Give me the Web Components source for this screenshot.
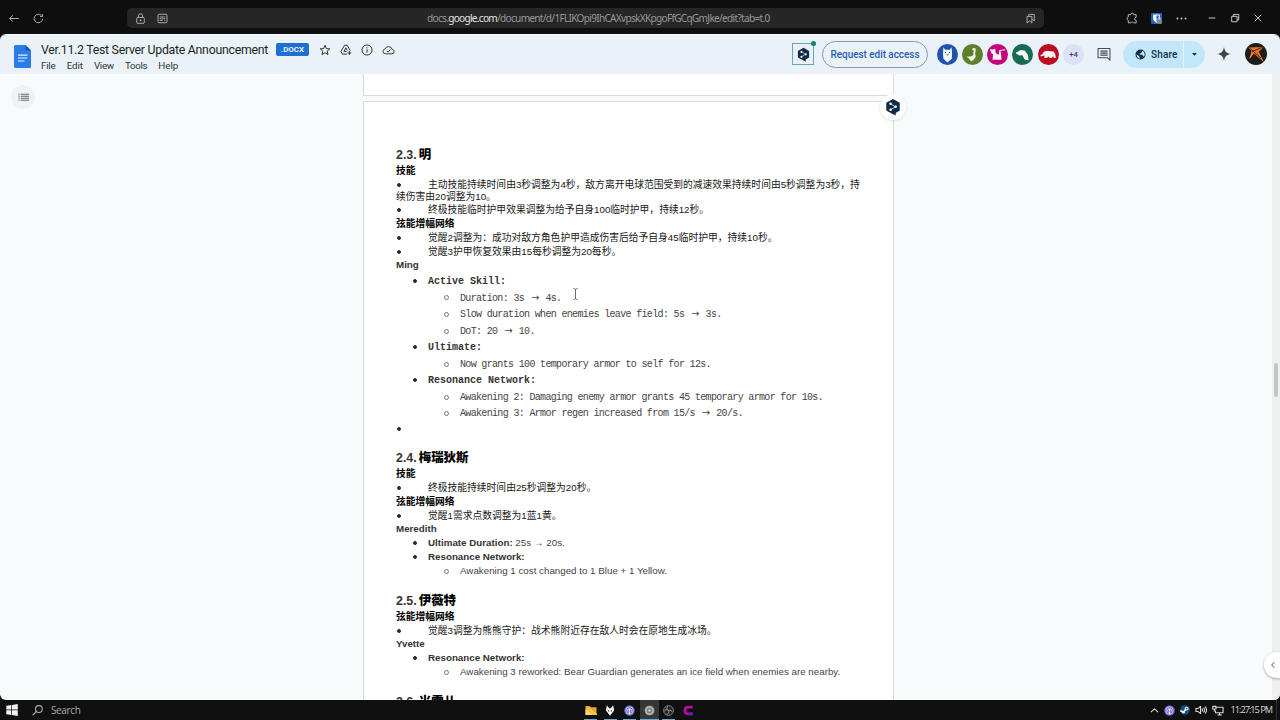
<!DOCTYPE html>
<html lang="zh-CN">
<head>
<meta charset="utf-8">
<title>Ver.11.2 Test Server Update Announcement</title>
<style>
  body {
    margin: 0;
    width: 1280px;
    height: 720px;
    overflow: hidden;
    background: #0e0e0e;
  }
</style>
</head>
<body>
<app-desktop></app-desktop>

<script>
// Inline icons, keyed by name: [viewBox, markup]
const deeplMark = `<path fill="#102b46" d="M10 1 17.5 5.3V14L13 16.7V19.5L9.5 17.8 2.5 14V5.3z"/>
  <path d="M7.3 6.5 13 9.8 7.3 13" stroke="#dff3fa" stroke-width=".9" fill="none"/>
  <g fill="#fff"><circle cx="7.3" cy="6.5" r="1.4"/><circle cx="13" cy="9.8" r="1.4"/><circle cx="7.3" cy="13" r="1.4"/></g>`

const podcast = `<circle cx="12" cy="12" r="11.5" fill="#6a61c8"/>
  <g fill="none" stroke="#dcd8ff" stroke-width="1.7"><circle cx="12" cy="12" r="8"/><path d="M8.3 14.6a4.5 4.5 0 1 1 7.4 0"/></g>
  <circle cx="12" cy="11" r="2.1" fill="#fff"/><path d="M10.1 14h3.8l-.6 6h-2.6z" fill="#fff"/>`

const icons = {
  back: ["0 0 16 16", `<path d="M14.5 8H2M6.5 3.5 2 8l4.500 4.500" class="line"/>`],
  reload: ["0 0 16 16", `<path d="M14 8.500A6.200 6.200 0 1 1 12.300 3.700M13.800 1.500V5.200H10.200" class="line"/>`],
  lock: ["0 0 16 16", `<rect x="2.500" y="6.500" width="11" height="8.500" rx="1.500" class="line"/><path d="M5 6.500V4a3 3 0 0 1 6 0v2.500" class="line"/><circle cx="8" cy="10.800" r="1.200" fill="currentColor"/>`],
  tune: ["0 0 16 16", `<rect x="1.500" y="1.800" width="13" height="12.400" rx="1.500" class="line"/><path d="M4 5.700h3M10 5.700h2M4 8.200h2.500M9 8.200h3M4 10.800h4M10.500 10.800h1.500M8.500 4.500v2.300M7.700 7v2.300" class="line"/>`],
  bookmarks: ["0 0 16 16", `<path d="M3 5h7v9.500L6.500 11.500 3 14.500zM5.500 4.500V2h8v9.500l-3-2.300" class="line"/>`],
  puzzle: ["0 0 16 16", `<path d="M6.300 3.500a2 2 0 0 1 4 0h3.200V7a2 2 0 0 0 0 4v3.500H10a2 2 0 0 0-3.600 0H3V11a2.200 2.200 0 0 1 0-4.200V3.500z" class="line"/>`],
  shield: ["0 0 16 16", `<rect width="16" height="16" rx="1.500" fill="#2460be"/><path d="M3.200 2h9.600v6c0 3-2.300 4.900-4.800 6.200C5.500 12.900 3.200 11 3.200 8z" fill="#fff"/><path d="M8 3.500h3.300V8c0 2-1.500 3.200-3.300 4.300z" fill="#2460be"/><rect x="8.500" y="9.500" width="7" height="6" rx="1" fill="#858a90"/><path d="M10 9.800V8.500a2 2 0 0 1 4 0v1.300" stroke="#ccd" fill="none"/>`],
  dots: ["0 0 16 16", `<g fill="currentColor"><circle cx="3" cy="8" r="1.200"/><circle cx="8" cy="8" r="1.200"/><circle cx="13" cy="8" r="1.200"/></g>`],
  minimize: ["0 0 12 12", `<path d="M2 6h8" class="line"/>`],
  restore: ["0 0 12 12", `<path d="M2 4h6.500v6.500H2zM4 4V1.700h6.500v6.500H8.500" class="line"/>`],
  close: ["0 0 12 12", `<path d="m2 2 8 8M10 2l-8 8" class="line"/>`],

  docs: ["0 0 17 23", `<path fill="#2a7de9" d="M1.500 0H11.500L17 5.500V21.500a1.500 1.500 0 0 1-1.500 1.500h-14A1.500 1.500 0 0 1 0 21.500v-20A1.500 1.500 0 0 1 1.500 0z"/><path fill="#1458b8" d="M11.500 0 17 5.500H11.500z"/><path stroke="#e8f2ff" stroke-width="1.200" d="M4 10.100h9.500M4 13h9.500M4 16h6.500"/>`],
  star: ["0 0 16 16", `<path d="m8 1.800 1.800 4.300 4.600.4-3.500 3 1.100 4.600L8 11.700l-4 2.400 1.100-4.600-3.500-3 4.600-.4z" class="line"/>`],
  drive: ["0 0 16 16", `<path d="M6 1.700h3.500l4.300 7.300M6 1.700 1.300 10l1.900 3.500h6M5.200 9.800l2.600-4.700 2 3.700M5.200 9.800H9M12.500 9.500v5M10 12h5" class="line"/>`],
  info: ["0 0 16 16", `<circle cx="8" cy="8" r="6.700" class="line"/><path d="M8 7v4.500M8 4.300v1.500" class="line"/>`],
  cloud: ["0 0 18 14" , `<path d="M5 12.300h8.500a3 3 0 0 0 .7-6A5.400 5.400 0 0 0 4 5.600a3.400 3.400 0 0 0 1 6.700z" class="line"/><path d="m6.300 8 2 2 3.700-3.800" class="line"/>`],
  deepl: ["0 0 20 20", deeplMark],
  comment: ["0 0 16 16", `<path d="M1.200 1.800h13.600V15l-2.800-2.800H1.200z" class="line"/><path d="M3.800 4.700h8.400M3.800 7h8.400M3.800 9.300h8.400" class="line"/>`],
  globe: ["0 0 16 16", `<circle cx="8" cy="8" r="7.300" fill="#132f43"/><path fill="#c2e7fb" d="M2.300 7.500 6.500 11v1.300L8 14c-3.500 0-5.800-3-5.700-6.500zM9.500 2.300C13 3.200 14.300 6 14 9l-.8 2-1.400-.5-.8-2.300H7V6.700h1.300L8.800 5h1.500V3z"/>`],
  caret: ["0 0 10 6", `<path fill="currentColor" d="M0 0h10L5 5.500z"/>`],
  spark: ["0 0 16 16", `<path fill="#3d4650" d="M8 0C8.800 5 11 7.200 16 8 11 8.800 8.800 11 8 16 7.200 11 5 8.800 0 8 5 7.200 7.200 5 8 0z"/>`],
  list: ["0 0 12 10", `<path d="M3 1.400h9M3 3.600h9M3 5.800h9M3 8h9M.5 1.400h1.300M.5 3.600h1.300M.5 5.800h1.300M.5 8h1.300" stroke="currentColor" stroke-width=".9"/>`],
  chevron: ["0 0 8 10", `<path d="M5.800 1.500 2.200 5l3.600 3.500" class="line"/>`],

  llama: ["0 0 22 22", `<circle cx="11" cy="11" r="11" fill="#1f53ad"/><path fill="#f4f8fc" d="M6.700 3.300 8.700 6h4.600l2-2.700.5 7.500-.3 4.700L11 19.300 6.700 15.500l-.4-5z"/><g fill="#26568f"><circle cx="9" cy="8.800" r=".7"/><circle cx="13" cy="8.800" r=".7"/><path d="M9.700 10.700h2.600L11 12.300z"/></g>`],
  duck: ["0 0 22 22", `<circle cx="11" cy="11" r="11" fill="#5e802b"/><path fill="#f0f6e8" d="M10.300 5.600 12 4.200c1.800-.5 2.700.8 2.300 2.500l-.6 3.800.8 2.300-2.300 4-2.700 1.200-3-3.500-2-1.500 5 .2 2.400-1.700.2-5z"/>`],
  cat: ["0 0 22 22", `<circle cx="11" cy="11" r="11" fill="#c4057a"/><path fill="#fff1f9" d="m3 5 2.500 1L8.500 4.700l.7 4.800 3 2 .8-5.200 6-.7v1l-4.900.6.8 4.600.4 4.800H5.700L6.500 11 4.500 9.700z"/>`],
  manatee: ["0 0 22 22", `<circle cx="11" cy="11" r="11" fill="#176a54"/><path fill="#f1faf6" d="m4 9.200 5-3 4.200.7 3.500 4.300.8 6.100-4.200-1.100-2.400-4.500-3.200.3-3.200-1.700z"/>`],
  rhino: ["0 0 22 22", `<circle cx="11" cy="11" r="11" fill="#bd0b24"/><path fill="#fff3f2" d="m2.700 11.600 2.100-1 1.300-2.500 3.400-1 3.400.5 3.200.2 1.900 2.500.8 4.400h-2.400l-.5-2.200-1.700 2.200h-2.100l-.8-1.700-2.500 1.600H6.500l.4-2.600-4.200 1z"/>`],
  user: ["0 0 22 22", `<circle cx="11" cy="11" r="11" fill="#1b1d1e"/><path fill="#ee741d" d="m3.500 4.500 15-.5-4.700 4.700L19 19.300 9 10.500 4.300 16.400 6.400 8z"/><path d="m5 5.500 11 9.500M18 4 7 8.500" stroke="#1b1d1e" stroke-width=".8"/>`],

  windows: ["0 0 12 12", `<path fill="#f2f2f2" d="M.3 1.800 5.300 1v4.600h-5zM6 .9 11.800 0v5.600H6zM.3 6.300h5V11l-5-.8zM6 6.300h5.800V12L6 11.100z"/>`],
  search: ["0 0 12 12", `<circle cx="7.500" cy="4.400" r="3.700" class="line"/><path d="M4.800 7.100.7 11.300" class="line"/>`],
  folder: ["0 0 12 12", `<path fill="#e6a72e" d="M.5 1h4l1.300 1.500h5.700V11H.5z"/><path fill="#ffd66b" d="M.5 4.300 8.500 11h-8z"/><path fill="#f6c247" d="M.5 3h4L12 9.500V11H8.500z"/>`],
  foobar: ["0 0 12 12", `<path fill="#f4f4f4" d="M2.300.3 5 3.600h2L9.700.3l1.400 5.500L6 11.800.9 5.800z"/><path fill="#161616" d="m3.200 5 2 1.500-.6 1zM8.800 5l-2 1.500.6 1z"/>`],
  podcast: ["0 0 24 24", podcast],
  disc: ["0 0 12 12", `<circle cx="6" cy="6" r="5.300" fill="#a9adad"/><circle cx="6" cy="6" r="2.800" fill="#767a7b"/><circle cx="6" cy="6" r="1.200" fill="#eee"/>`],
  obs: ["0 0 12 12", `<circle cx="6" cy="6" r="5.300" fill="#222" stroke="#aaa" stroke-width=".8"/><path d="M5.500 1.500a2.300 2.300 0 0 0 1 4.400 2.600 2.600 0 0 1 3.500 1.700M6 6a2.500 2.500 0 0 1-2.300 4M5.200 5.500A2.500 2.500 0 0 0 1.500 7" stroke="#aaa" stroke-width=".9" fill="none"/>`],
  letterC: ["0 0 12 12", `<path d="M10.700 2.400H5.500Q2 2.400 2 6t3.500 3.600h5.200" stroke="#b30d9c" stroke-width="3" fill="none"/><path d="M6 8.100h4.700v3H6z" fill="#7616ac"/>`],
  up: ["0 0 10 6", `<path d="m1 5 4-4 4 4" class="line"/>`],
  steam: ["0 0 12 12", `<circle cx="6" cy="6" r="5.800" fill="#17507e"/><path d="m.3 6.800 3.700 1.600L8 4" stroke="#e9f0f6" stroke-width="2" fill="none"/><circle cx="8" cy="4.300" r="2.300" fill="#e9f0f6"/><circle cx="8" cy="4.300" r="1" fill="#17507e"/><circle cx="4.200" cy="8.700" r="1.600" fill="#e9f0f6"/>`],
  volume: ["0 0 13 12", `<path d="M1 4.300h2L6 1.700v8.600L3 7.700H1zM7.500 4.300q1.200 1.700 0 3.400M9.300 3q2 3 0 6M11 1.700q3 4.300 0 8.600" class="line"/>`],
  network: ["0 0 13 12", `<path d="M4.500 2.500H12v6H3.800V6M6 10.800h4.500M8.200 8.500v2.300M.8 1.500h3.500v2.800H.8zM2.500 4.300V7" class="line"/>`],
  ibeam: ["0 0 6 12", `<path d="M.5.700h1.700l.8.600.8-.6h1.700M3 1.300v9.400M.5 11.300h1.700l.8-.6.8.6h1.700" stroke="#333" stroke-width=".8" fill="none"/>`],
}

class UiIcon extends HTMLElement {
  constructor() {
    super()
    this.attachShadow({ mode: "open" })
  }

  connectedCallback() {
    const [viewBox, markup] = icons[this.getAttribute("name")]
    const width = this.getAttribute("width") || 12
    const height = this.getAttribute("height") || width
    this.shadowRoot.innerHTML = /*html*/ `
      <style>
        :host { display: block; flex: none; width: ${width}px; height: ${height}px; }
        svg { display: block; width: 100%; height: 100%; }
        .line {
          fill: none;
          stroke: currentColor;
          stroke-width: var(--stroke, 1.2);
          stroke-linejoin: round;
        }
      </style>
      <svg viewBox="${viewBox}" preserveAspectRatio="none">${markup}</svg>
    `
  }
}
customElements.define("ui-icon", UiIcon)

// Spreads its text over a given width by adjusting the letter spacing.
// No whitespace around the slot: white-space is pre in here.
class FitText extends HTMLElement {
  constructor() {
    super()
    this.attachShadow({ mode: "open" }).innerHTML =
      "<style>:host { display: inline-block; white-space: pre; flex: none; }</style><slot></slot>"
  }

  connectedCallback() {
    const natural = this.getBoundingClientRect().width
    const target = Number(this.getAttribute("width"))
    const spacing = (target - natural) / this.textContent.length
    this.style.letterSpacing = `${spacing.toFixed(4)}px`
  }
}

class BrowserBar extends HTMLElement {
  constructor() {
    super()
    this.attachShadow({ mode: "open" }).innerHTML = /*html*/ `
      <style>
        :host {
          display: flex;
          align-items: center;
          box-sizing: border-box;
          height: 34px;
          padding: 2px 17px 0 8px;
          background: #0e0e0e;
          color: #c6c6c6;
        }
        .address {
          display: flex;
          align-items: center;
          box-sizing: border-box;
          width: 917px;
          height: 20px;
          margin-left: 83px;
          padding: 0 8px;
          border-radius: 5px;
          background: #262626;
        }
        .url {
          flex: 1;
          padding-left: 259px;
          font: 10.100px/20px "Noto Sans", sans-serif;
          color: #989898;
          white-space: nowrap;
        }
        b { font-weight: normal; color: #e4e4e4; }
        .end {
          display: flex;
          align-items: center;
          margin-left: auto;
          gap: 13px;
        }
      </style>
      <ui-icon name="back" width="12" height="11"></ui-icon>
      <ui-icon name="reload" width="11" style="margin-left: 13px"></ui-icon>
      <div class="address">
        <ui-icon name="lock" width="11"></ui-icon>
        <ui-icon name="tune" width="11" style="margin-left: 11px"></ui-icon>
        <div class="url"><fit-text width="342.500">docs.<b>google.com</b>/document/d/1FLIKOpi9IhCAXvpskXKpgoFfGCqGmJke/edit?tab=t.0</fit-text></div>
        <ui-icon name="bookmarks" width="11"></ui-icon>
      </div>
      <div class="end">
        <ui-icon name="puzzle" width="12"></ui-icon>
        <ui-icon name="shield" width="11"></ui-icon>
        <ui-icon name="dots" width="13"></ui-icon>
        <ui-icon name="minimize" width="10" style="margin-left: 6px"></ui-icon>
        <ui-icon name="restore" width="10"></ui-icon>
        <ui-icon name="close" width="10"></ui-icon>
      </div>
    `
  }
}
customElements.define("browser-bar", BrowserBar)

class DocsHeader extends HTMLElement {
  constructor() {
    super()
    this.attachShadow({ mode: "open" }).innerHTML = /*html*/ `
      <style>
        :host {
          display: flex;
          align-items: flex-start;
          box-sizing: border-box;
          height: 39px;
          padding: 5px 13px 0 14px;
          background: #eaf2f8;
          color: #434a50;
          font-family: Roboto, sans-serif;
        }
        .names { margin: 1px 0 0 10px; }
        .title {
          display: flex;
          align-items: center;
          height: 17px;
          margin-bottom: 1px;
          font-size: 12.300px;
          color: #1c1f21;
        }
        .badge {
          margin-left: 8px;
          width: 33px;
          height: 13px;
          border-radius: 2px;
          background: #1f6fd2;
          color: #e4f0ff;
          font: bold 8px/13px Roboto, sans-serif;
          text-align: center;
        }
        .menu {
          display: flex;
          gap: 11.200px;
          font-size: 9.800px;
          line-height: 13px;
          color: #303539;
        }
        .right {
          display: flex;
          align-items: center;
          height: 28px;
          margin-left: auto;
        }
        .deepl {
          position: relative;
          display: grid;
          place-items: center;
          box-sizing: border-box;
          width: 22px;
          height: 22px;
          border: 1px solid #69a6b8;
        }
        .deepl::after {
          content: "";
          position: absolute;
          top: -3px;
          right: -3px;
          width: 5px;
          height: 5px;
          border-radius: 50%;
          background: #148260;
        }
        .request {
          display: grid;
          place-items: center;
          box-sizing: border-box;
          width: 106px;
          height: 27px;
          margin-left: 8px;
          border: 1px solid #8e989d;
          border-radius: 14px;
          font-size: 10px;
          font-weight: 500;
          color: #2c5cb5;
        }
        .people { display: flex; gap: 4.300px; margin-left: 8.500px; }
        .more {
          width: 21px;
          height: 21px;
          border-radius: 50%;
          background: #dbe1f9;
          font: 500 7.500px/21px Roboto, sans-serif;
          text-align: center;
          color: #35425e;
        }
        .share {
          display: flex;
          height: 27px;
          margin-left: 12px;
          border-radius: 14px;
          overflow: hidden;
          gap: 1px;
          font-size: 10px;
          font-weight: 500;
          color: #132f43;
        }
        .share > div {
          display: flex;
          align-items: center;
          box-sizing: border-box;
          background: #c2e7fb;
        }
        .label { width: 60px; padding-left: 12px; gap: 5px; }
        .drop { width: 21px; padding-left: 8px; }
      </style>
      <ui-icon name="docs" width="17" height="23" style="margin-top: 5px"></ui-icon>
      <div class="names">
        <div class="title">
          <fit-text width="227">Ver.11.2 Test Server Update Announcement</fit-text>
          <span class="badge">.DOCX</span>
          <ui-icon name="star" width="12" style="margin-left: 10px"></ui-icon>
          <ui-icon name="drive" width="12" style="margin-left: 9px"></ui-icon>
          <ui-icon name="info" width="12" style="margin-left: 9px"></ui-icon>
          <ui-icon name="cloud" width="13" height="10" style="margin-left: 9px"></ui-icon>
        </div>
        <div class="menu">
          <fit-text width="14.500">File</fit-text>
          <fit-text width="16">Edit</fit-text>
          <fit-text width="20">View</fit-text>
          <fit-text width="22">Tools</fit-text>
          <fit-text width="20">Help</fit-text>
        </div>
      </div>
      <div class="right">
        <div class="deepl"><ui-icon name="deepl" width="15"></ui-icon></div>
        <div class="request"><fit-text width="89">Request edit access</fit-text></div>
        <div class="people">
          <ui-icon name="llama" width="21"></ui-icon>
          <ui-icon name="duck" width="21"></ui-icon>
          <ui-icon name="cat" width="21"></ui-icon>
          <ui-icon name="manatee" width="21"></ui-icon>
          <ui-icon name="rhino" width="21"></ui-icon>
          <div class="more">+4</div>
        </div>
        <ui-icon name="comment" width="14" style="margin-left: 13px"></ui-icon>
        <div class="share">
          <div class="label"><ui-icon name="globe" width="11"></ui-icon><fit-text width="26.500">Share</fit-text></div>
          <div class="drop"><ui-icon name="caret" width="5" height="3"></ui-icon></div>
        </div>
        <ui-icon name="spark" width="14" style="margin-left: 12px"></ui-icon>
        <ui-icon name="user" width="22" style="margin-left: 14px"></ui-icon>
      </div>
    `
  }
}
customElements.define("docs-header", DocsHeader)

// One paragraph. type: heading, strong, point (hanging bullet), name, item, sub
class DocLine extends HTMLElement {
  constructor() {
    super()
    this.attachShadow({ mode: "open" }).innerHTML = /*html*/ `
      <style>
        :host {
          display: block;
          height: 14px;
          font: 9.780px/14px "Liberation Sans", "Noto Sans CJK SC", sans-serif;
          color: #444;
          white-space: nowrap;
        }
        :host([type="heading"]) {
          height: 18px;
          line-height: 18px;
          font-size: 12.440px;
          font-weight: bold;
          margin-top: 14px;
          color: #333;
        }
        :host([type="strong"]) { font-weight: bold; color: #000; }
        :host([type="name"]) { font-weight: bold; color: #333; margin-top: -1px; }
        :host([type="point"]) { color: #181818; }
        :host([type="point"][wrapped]) { height: 25px; line-height: 12px; padding-top: 1px; box-sizing: border-box; }
        :host([mono]) {
          height: 16.560px;
          line-height: 18px;
          font-family: "Liberation Mono", monospace;
          font-size: 10px;
          letter-spacing: -.662px;
        }
        .mark {
          display: inline-block;
          box-sizing: border-box;
          vertical-align: middle;
          border: 1px solid #2b2b2b;
          border-radius: 50%;
          width: 4px;
          height: 4px;
          background: #2b2b2b;
          margin: -1px 11px 0 17px;
        }
        :host([type="point"]) .mark { width: 4.500px; height: 4.500px; margin: -1px 27px 0 .5px; }
        :host([type="sub"]) .mark {
          width: 5px;
          height: 5px;
          border: .8px solid #777;
          background: none;
          margin: 0 11px 0 48px;
        }
        .mark[hidden] { display: none; }
      </style>
      <span class="mark"></span><slot></slot>
    `
  }

  connectedCallback() {
    const marked = ["point", "item", "sub"].includes(this.getAttribute("type"))
    this.shadowRoot.querySelector(".mark").hidden = !marked
  }
}
customElements.define("doc-line", DocLine)

class DocPage extends HTMLElement {
  constructor() {
    super()
    this.attachShadow({ mode: "open" }).innerHTML = /*html*/ `
      <style>
        :host {
          display: block;
          box-sizing: border-box;
          width: 531px;
          margin-left: 363px;
          border: 1px solid #d9dcdd;
          background: #fff;
          padding: 30px 0 0 32px;
        }
      </style>
      <slot></slot>
    `
  }
}
customElements.define("doc-page", DocPage)

class DocsCanvas extends HTMLElement {
  constructor() {
    super()
    this.attachShadow({ mode: "open" }).innerHTML = /*html*/ `
      <style>
        :host {
          display: block;
          position: relative;
          height: 626px;
          overflow: hidden;
          background: #f8fbfc;
        }
        .before { height: 22px; padding: 0; border-top: 0; margin-bottom: 5px; }
        .current { height: 640px; }
        b { color: #000; margin-left: -1.500px; }
        strong { color: #333; }
        [mono] strong { letter-spacing: 0; }
        /* full-width arrow: two cells of the monospaced grid */
        i {
          display: inline-block;
          width: 10.680px;
          font: 10px/12px "DejaVu Sans", sans-serif;
          text-align: center;
        }
        .outline, .float, .side {
          position: absolute;
          display: grid;
          place-items: center;
          border-radius: 50%;
        }
        .outline { left: 11px; top: 11px; width: 24px; height: 24px; background: #eef2f4; color: #454a4d; }
        .float { left: 880px; top: 20px; width: 26px; height: 26px; background: #fff; box-shadow: 0 1px 3px #0002; }
        .side {
          left: 1264px;
          top: 578px;
          width: 26px;
          height: 26px;
          background: #fff;
          box-shadow: 0 1px 3px #0005;
          color: #444;
        }
        .side ui-icon { margin-right: 9px; }
        .scroll { position: absolute; right: 0; top: 0; bottom: 0; width: 8px; background: #efefef; }
        .thumb { position: absolute; left: 2px; top: 289px; width: 4px; height: 34px; border-radius: 2px; background: #c3c5c5; }
        .cursor { position: absolute; left: 573px; top: 214px; }
      </style>
      <doc-page class="before"></doc-page>
      <doc-page class="current">
        <doc-line type="heading">2.3. <b>明</b></doc-line>
        <doc-line type="strong">技能</doc-line>
        <doc-line type="point" wrapped>主动技能持续时间由3秒调整为4秒，敌方离开电球范围受到的减速效果持续时间由5秒调整为3秒，持<br>续伤害由20调整为10。</doc-line>
        <doc-line type="point">终极技能临时护甲效果调整为给予自身100临时护甲，持续12秒。</doc-line>
        <doc-line type="strong">弦能增幅网络</doc-line>
        <doc-line type="point">觉醒2调整为：成功对敌方角色护甲造成伤害后给予自身45临时护甲，持续10秒。</doc-line>
        <doc-line type="point">觉醒3护甲恢复效果由15每秒调整为20每秒。</doc-line>
        <doc-line type="name" style="margin-bottom: 1px">Ming</doc-line>
        <doc-line type="item" mono><strong>Active Skill:</strong></doc-line>
        <doc-line type="sub" mono>Duration: 3s <i>→</i> 4s.</doc-line>
        <doc-line type="sub" mono>Slow duration when enemies leave field: 5s <i>→</i> 3s.</doc-line>
        <doc-line type="sub" mono>DoT: 20 <i>→</i> 10.</doc-line>
        <doc-line type="item" mono><strong>Ultimate:</strong></doc-line>
        <doc-line type="sub" mono>Now grants 100 temporary armor to self for 12s.</doc-line>
        <doc-line type="item" mono><strong>Resonance Network:</strong></doc-line>
        <doc-line type="sub" mono>Awakening 2: Damaging enemy armor grants 45 temporary armor for 10s.</doc-line>
        <doc-line type="sub" mono>Awakening 3: Armor regen increased from 15/s <i>→</i> 20/s.</doc-line>
        <doc-line type="point"></doc-line>
        <doc-line type="heading" style="margin-top: 13px">2.4. <b>梅瑞狄斯</b></doc-line>
        <doc-line type="strong">技能</doc-line>
        <doc-line type="point">终极技能持续时间由25秒调整为20秒。</doc-line>
        <doc-line type="strong">弦能增幅网络</doc-line>
        <doc-line type="point">觉醒1需求点数调整为1蓝1黄。</doc-line>
        <doc-line type="name">Meredith</doc-line>
        <doc-line type="item"><strong>Ultimate Duration:</strong> 25s → 20s.</doc-line>
        <doc-line type="item"><strong>Resonance Network:</strong></doc-line>
        <doc-line type="sub">Awakening 1 cost changed to 1 Blue + 1 Yellow.</doc-line>
        <doc-line type="heading">2.5. <b>伊薇特</b></doc-line>
        <doc-line type="strong">弦能增幅网络</doc-line>
        <doc-line type="point">觉醒3调整为熊熊守护：战术熊附近存在敌人时会在原地生成冰场。</doc-line>
        <doc-line type="name">Yvette</doc-line>
        <doc-line type="item"><strong>Resonance Network:</strong></doc-line>
        <doc-line type="sub">Awakening 3 reworked: Bear Guardian generates an ice field when enemies are nearby.</doc-line>
        <doc-line type="heading">2.6. <b>米雪儿</b></doc-line>
      </doc-page>
      <div class="outline"><ui-icon name="list" width="11" height="9"></ui-icon></div>
      <div class="float"><ui-icon name="deepl" width="18"></ui-icon></div>
      <ui-icon class="cursor" name="ibeam" width="5" height="12"></ui-icon>
      <div class="scroll"><div class="thumb"></div></div>
      <div class="side"><ui-icon name="chevron" width="6" height="8"></ui-icon></div>
    `
  }
}
customElements.define("docs-canvas", DocsCanvas)

class TaskBar extends HTMLElement {
  constructor() {
    super()
    this.attachShadow({ mode: "open" }).innerHTML = /*html*/ `
      <style>
        :host {
          display: grid;
          grid-template-columns: 581px 1fr auto;
          align-items: center;
          box-sizing: border-box;
          height: 20px;
          padding-right: 3px;
          background: #101010;
          color: #d8d8d8;
          font: 10px/20px "Open Sans", sans-serif;
        }
        .start { display: flex; align-items: center; padding-left: 6px; color: #aaa; }
        .apps { display: flex; height: 20px; }
        .apps div {
          display: grid;
          place-items: center;
          box-sizing: border-box;
          width: 19.500px;
          height: 20px;
          background: linear-gradient(#6da9d4, #6da9d4) center bottom / 13px 1px no-repeat;
        }
        .apps .active { background: linear-gradient(#6da9d4, #6da9d4) bottom / 100% 1px no-repeat #363838; }
        .apps .idle { background: none; }
        .tray { display: flex; align-items: center; gap: 5px; font-size: 9.200px; }
        .tray fit-text { margin-left: 2px; }
        .peek { width: 1px; height: 20px; margin-left: -1px; background: #333; }
      </style>
      <div class="start">
        <ui-icon name="windows" width="12"></ui-icon>
        <ui-icon name="search" width="11" style="margin-left: 14px"></ui-icon>
        <fit-text width="29.500" style="margin-left: 8px">Search</fit-text>
      </div>
      <div class="apps">
        <div><ui-icon name="folder" width="12" height="11"></ui-icon></div>
        <div><ui-icon name="foobar" width="10" height="11"></ui-icon></div>
        <div><ui-icon name="podcast" width="11"></ui-icon></div>
        <div class="active"><ui-icon name="disc" width="11"></ui-icon></div>
        <div><ui-icon name="obs" width="11"></ui-icon></div>
        <div class="idle"><ui-icon name="letterC" width="11"></ui-icon></div>
      </div>
      <div class="tray">
        <ui-icon name="up" width="9" height="5"></ui-icon>
        <ui-icon name="podcast" width="11"></ui-icon>
        <ui-icon name="steam" width="10"></ui-icon>
        <ui-icon name="volume" width="12" height="10"></ui-icon>
        <ui-icon name="network" width="12" height="11"></ui-icon>
        <fit-text width="41.500">11:27:15 PM</fit-text>
        <div class="peek"></div>
      </div>
    `
  }
}
customElements.define("task-bar", TaskBar)

class AppDesktop extends HTMLElement {
  constructor() {
    super()
    this.attachShadow({ mode: "open" }).innerHTML = /*html*/ `
      <style>
        :host { display: block; width: 1280px; height: 720px; }
        .window {
          box-sizing: border-box;
          height: 666px;
          border-top: 1px solid #f8fafb;
          border-radius: 6px;
          overflow: hidden;
        }
      </style>
      <browser-bar></browser-bar>
      <div class="window">
        <docs-header></docs-header>
        <docs-canvas></docs-canvas>
      </div>
      <task-bar></task-bar>
    `
  }
}
customElements.define("app-desktop", AppDesktop)

// Last, so that every text is laid out before it is measured
customElements.define("fit-text", FitText)
</script>
</body>
</html>
